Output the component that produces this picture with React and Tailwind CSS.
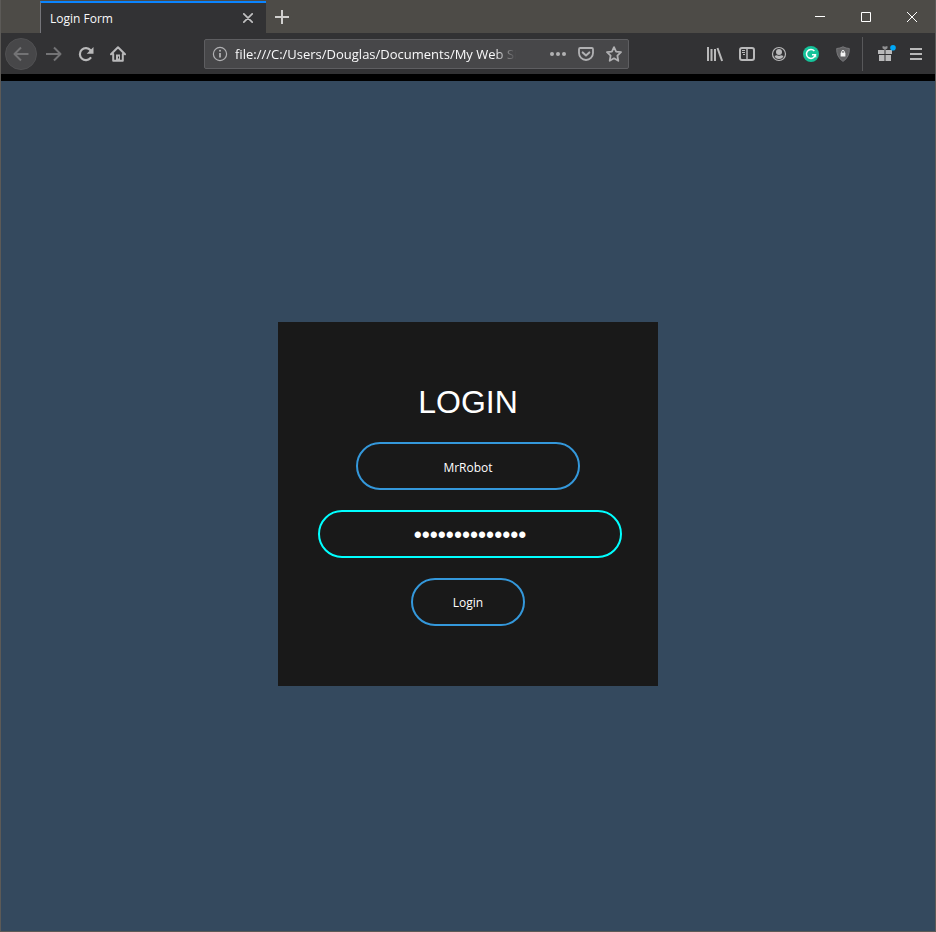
const toolButton = "flex h-8 w-8 shrink-0 items-center justify-center text-[#b9b9ba]";

function Icon({ children, className = "" }) {
  return (
    <svg width="16" height="16" viewBox="0 0 16 16" fill="none" stroke="currentColor" strokeWidth="2" className={className} aria-hidden="true">
      {children}
    </svg>
  );
}

function ToolButton({ label, className = "", children }) {
  return (
    <button type="button" aria-label={label} className={`${toolButton} ${className}`}>
      {children}
    </button>
  );
}

function TitleBar() {
  return (
    <header className="flex h-[33px] bg-[#4d4b47]">
      <div className="ml-[39px] mt-px flex w-[226px] items-center justify-between border-l border-t-2 border-l-[#75757a] border-t-[#0a84ff] bg-[#323234] pl-[9px] pr-2">
        <span className="pt-0.5 text-xs text-[#f9f9fa]">Login Form</span>
        <button type="button" aria-label="Close tab" className="flex h-5 w-5 items-center justify-center text-[#c0c0c1]">
          <svg width="10" height="10" viewBox="0 0 10 10" stroke="currentColor" strokeWidth="1.7" strokeLinecap="round" aria-hidden="true">
            <path d="M.8.8l8.4 8.4M9.2.8L.8 9.2" />
          </svg>
        </button>
      </div>
      <ToolButton label="New tab" className="pt-0.5">
        <svg width="14" height="14" viewBox="0 0 14 14" stroke="#d0cfce" strokeWidth="2" aria-hidden="true">
          <path d="M0 7h14M7 0v14" />
        </svg>
      </ToolButton>
      <div className="ml-auto flex text-white">
        <button type="button" aria-label="Minimize" className="flex w-[46px] items-center justify-center">
          <svg width="10" height="10" viewBox="0 0 10 10" stroke="currentColor" aria-hidden="true"><path d="M0 4.5h10" /></svg>
        </button>
        <button type="button" aria-label="Maximize" className="flex w-[46px] items-center justify-center">
          <svg width="10" height="10" viewBox="0 0 10 10" fill="none" stroke="currentColor" aria-hidden="true"><path d="M.5.5h9v9h-9z" /></svg>
        </button>
        <button type="button" aria-label="Close" className="flex w-[46px] items-center justify-center">
          <svg width="10" height="10" viewBox="0 0 10 10" stroke="currentColor" aria-hidden="true"><path d="M0 0l10 10M10 0L0 10" /></svg>
        </button>
      </div>
    </header>
  );
}

function AddressBar() {
  return (
    <div className="ml-[70px] flex h-[30px] w-[425px] min-w-0 items-center rounded-xs border border-[#5e5e61] bg-[#474749] pl-[7px] text-[#b1b1b3]">
      <Icon className="shrink-0">
        <circle cx="8" cy="8" r="6.6" strokeWidth="1.2" />
        <path d="M8 7v4.5" strokeWidth="1.8" />
        <circle cx="8" cy="4.8" r="1" fill="currentColor" stroke="none" />
      </Icon>
      <input
        aria-label="Address"
        defaultValue="file:///C:/Users/Douglas/Documents/My Web Sites"
        className="ml-[7px] w-[281px] min-w-0 bg-transparent pt-0.5 text-[13px] text-[#f9f9fa] outline-none [mask-image:linear-gradient(to_right,black_92%,transparent)]"
      />
      <div className="ml-auto flex">
        <button type="button" aria-label="Page actions" className="flex h-7 w-7 items-center justify-center">
          <Icon>
            <g fill="currentColor" stroke="none"><circle cx="2" cy="8" r="2" /><circle cx="8" cy="8" r="2" /><circle cx="14" cy="8" r="2" /></g>
          </Icon>
        </button>
        <button type="button" aria-label="Save to Pocket" className="flex h-7 w-7 items-center justify-center">
          <Icon>
            <path d="M2.2 2h11.6q1.2 0 1.2 1.2V7a7 7 0 0 1-14 0V3.2Q1 2 2.2 2z" strokeWidth="1.8" />
            <path d="M4.7 6.4L8 9.5l3.3-3.1" strokeLinecap="round" strokeLinejoin="round" />
          </Icon>
        </button>
        <button type="button" aria-label="Bookmark this page" className="flex h-7 w-7 items-center justify-center">
          <Icon>
            <path d="M8 1.1l2.100 4.500 4.900.6-3.600 3.400.9 5.200L8 12.300l-4.300 2.500.9-5.200L1 6.200l4.900-.6z" strokeWidth="1.800" strokeLinejoin="round" />
          </Icon>
        </button>
      </div>
    </div>
  );
}

function Toolbar() {
  return (
    <nav className="flex h-[41px] items-center bg-[#323234] pl-1">
      <ToolButton label="Back" className="rounded-full border border-[#505052] bg-[#474749]">
        <Icon className="text-[#737375]"><path d="M15.5 8H1.5M8 1.5L1.5 8 8 14.5" strokeLinejoin="round" /></Icon>
      </ToolButton>
      <ToolButton label="Forward" className="ml-px">
        <Icon className="text-[#737375]"><path d="M0 8h14.5M8 1.5L14.5 8 8 14.5" strokeLinejoin="round" /></Icon>
      </ToolButton>
      <ToolButton label="Reload">
        <Icon>
          <path d="M12.5 12A6 6 0 1 1 12.5 4.3" strokeWidth="2.2" strokeLinecap="round" />
          <path d="M15.5 1v6.800h-6.800z" fill="currentColor" stroke="none" />
        </Icon>
      </ToolButton>
      <ToolButton label="Home">
        <Icon>
          <path d="M1 8.300L8 1.300l7 7M3.200 8v6.800h9.600V8" strokeLinecap="round" strokeLinejoin="round" />
          <path d="M6 14V8.500h4V14z" fill="currentColor" stroke="none" />
          <path d="M8.500 10.500v2" stroke="#323234" strokeWidth="1" />
        </Icon>
      </ToolButton>
      <AddressBar />
      <div className="ml-auto flex items-center pr-[3px]">
        <ToolButton label="Library">
          <Icon><path d="M1 1v14M4.500 3v12M8 3v12M10.500 2l4.600 13" /></Icon>
        </ToolButton>
        <ToolButton label="Sidebars">
          <Icon>
            <rect x="1" y="2" width="14" height="12" rx="2" />
            <path d="M8 2v12" strokeWidth="1.500" />
            <path d="M3 4.500h3M3 6.500h3M4 8.500h2" strokeWidth="1" />
          </Icon>
        </ToolButton>
        <ToolButton label="Account">
          <Icon>
            <circle cx="8" cy="8" r="6.500" strokeWidth="1.200" />
            <circle cx="8" cy="6" r="3" fill="currentColor" stroke="none" />
            <path d="M3.500 10q1.500-.8 2.500-.7 2 1 4 0 1 0 2.500.7Q11.500 13 8 13t-4.500-3z" fill="currentColor" stroke="none" />
          </Icon>
        </ToolButton>
        <ToolButton label="Grammarly">
          <Icon>
            <circle cx="8" cy="8" r="8" fill="#15c39a" stroke="none" />
            <path d="M11.400 5A4.500 4.500 0 1 0 12.400 8.800H9" stroke="#fff" strokeWidth="1.500" />
            <path d="M10.800 10.600l1.800-1.900.3 2.700" stroke="#fff" strokeWidth="1" />
          </Icon>
        </ToolButton>
        <ToolButton label="Protection">
          <Icon>
            <path d="M8 .8q3 1.600 6.300 1.700Q14.700 11 8 15.400 1.300 11 1.700 2.500 5 2.400 8 .8z" fill="#626264" stroke="#77777a" strokeWidth="1" />
            <rect x="5.600" y="6.700" width="4.800" height="3.800" fill="#f4f4f4" stroke="none" />
            <path d="M6.700 7V5.700q0-1.200 1.300-1.200t1.300 1.200V7" stroke="#f4f4f4" strokeWidth="1" />
          </Icon>
        </ToolButton>
        <span className="ml-[3px] h-[34px] w-px bg-[#58585a]" />
        <ToolButton label="What's new" className="ml-[6px]">
          <svg width="20" height="18" viewBox="0 0 20 18" className="ml-1 shrink-0" aria-hidden="true">
            <path d="M1 5h6.500v4H1zM8.500 5H15v4H8.500zM2 10h5.500v6H2zM8.500 10H14v6H8.500z" fill="#b9b9ba" />
            <path d="M8 5L5.500 3.300V1.200h1.800l.7.800.7-.8h1.800v2.100z" fill="#929294" />
            <circle cx="16" cy="2.800" r="2.800" fill="#00a8f8" />
          </svg>
        </ToolButton>
        <ToolButton label="Open menu" className="-ml-px">
          <Icon><path d="M2 3h12M2 8h12M2 13h12" /></Icon>
        </ToolButton>
      </div>
    </nav>
  );
}

function LoginForm() {
  const field = "h-12 rounded-3xl border-2 bg-transparent pt-0.5 text-center text-white outline-none";
  return (
    <form onSubmit={(event) => event.preventDefault()} className="flex w-[380px] flex-col items-center bg-[#191919] px-10 py-[60px]">
      <h1 className="mb-5 font-['Liberation_Sans',Arial,sans-serif] text-[32px] leading-10 text-white">LOGIN</h1>
      <input type="text" aria-label="Username" defaultValue="MrRobot" className={`${field} w-56 border-[#3498db] font-['Open_Sans',sans-serif] text-xs`} />
      <input
        type="password"
        aria-label="Password"
        defaultValue="fsociety-login"
        className={`${field} ml-1 mt-5 w-[304px] border-[#00ffff] font-['Liberation_Sans',Arial,sans-serif] text-[23px]`}
      />
      <button type="submit" className={`${field} mt-5 w-[114px] border-[#3498db] font-['Open_Sans',sans-serif] text-xs`}>Login</button>
    </form>
  );
}

export default function App() {
  return (
    <div className="flex min-h-screen flex-col border-x border-b border-[#5c5a57] bg-[#34495e] font-['Open_Sans','Noto_Sans',sans-serif]">
      <TitleBar />
      <Toolbar />
      <div className="h-[7px] bg-black" />
      <main className="flex flex-1 items-center justify-center pb-1">
        <LoginForm />
      </main>
    </div>
  );
}
